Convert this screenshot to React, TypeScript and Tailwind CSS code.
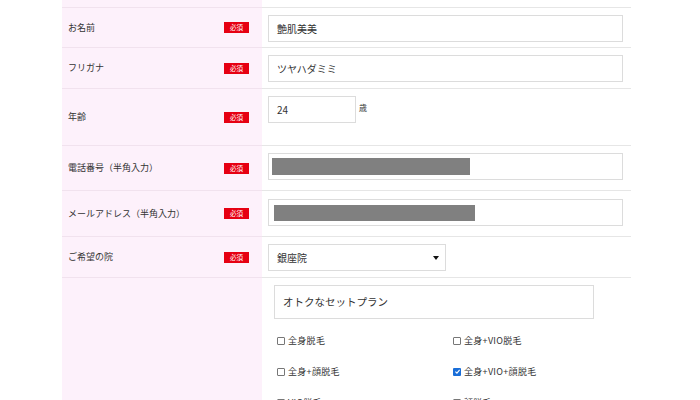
import React from "react";

const jp = { fontFamily: '"Noto Sans CJK JP", "Noto Sans", sans-serif' };

const Badge = () => (
  <span className="mr-[13px] flex h-[11px] w-[25px] items-center justify-center bg-[#e60012] text-[6.5px] leading-none text-white">
    必須
  </span>
);

interface RowProps {
  label?: string;
  required?: boolean;
  height: string;
  children?: React.ReactNode;
}

const Row: React.FC<RowProps> = ({ label, required, height, children }) => (
  <div className={`flex ${height}`}>
    <div className="flex w-[200px] shrink-0 items-center justify-between border-b border-[#f1e2ee] bg-[#fdf1fb] pl-[6px]">
      <span className="text-[9px] text-[#333]">{label}</span>
      {required && <Badge />}
    </div>
    <div className="flex-1 border-b border-[#e6e6e6] pl-[6px] pr-[8px] pt-[7px]">{children}</div>
  </div>
);

const Input: React.FC<{ value?: string; className?: string; children?: React.ReactNode }> = ({
  value,
  className = "px-[8px]",
  children,
}) => (
  <div className={`flex h-[27px] items-center border border-[#dcdcdc] bg-white text-[10px] text-[#333] ${className}`}>
    {value}
    {children}
  </div>
);

const Check: React.FC<{ label: string; checked?: boolean }> = ({ label, checked }) => (
  <div className="flex h-[31px] items-center gap-[3px] text-[9px] text-[#333]">
    {checked ? (
      <span className="flex h-[8px] w-[8px] items-center justify-center rounded-[1px] bg-[#1a6ed8]">
        <svg viewBox="0 0 10 10" className="h-[7px] w-[7px]">
          <path d="M2 5.2 L4.2 7.3 L8 2.8" stroke="white" strokeWidth="1.6" fill="none" />
        </svg>
      </span>
    ) : (
      <span className="h-[8px] w-[8px] rounded-[1px] border border-[#777] bg-white" />
    )}
    <span className="tracking-[0.3px]">{label}</span>
  </div>
);

export default function App() {
  return (
    <div className="h-[400px] w-[700px] overflow-hidden bg-white" style={jp}>
      <div className="ml-[62px] w-[569px]">
        <Row height="h-[8px]" />
        <Row label="お名前" required height="h-[40px]">
          <Input value="艶肌美美" />
        </Row>
        <Row label="フリガナ" required height="h-[41px]">
          <Input value="ツヤハダミミ" />
        </Row>
        <Row label="年齢" required height="h-[57px]">
          <div className="flex items-start gap-[3px]">
            <Input value="24" className="w-[88px] px-[8px]" />
            <span className="pt-[6px] text-[8px] text-[#333]">歳</span>
          </div>
        </Row>
        <Row label="電話番号（半角入力）" required height="h-[45px]">
          <Input className="h-[26px] pl-[3px]">
            <span className="h-[17px] w-[198px] bg-[#808080]" />
          </Input>
        </Row>
        <Row label="メールアドレス（半角入力）" required height="h-[46px]">
          <div className="pt-[1px]">
            <Input className="pl-[5px]">
              <span className="h-[16px] w-[201px] bg-[#808080]" />
            </Input>
          </div>
        </Row>
        <Row label="ご希望の院" required height="h-[41px]">
          <Input className="w-[178px] justify-between pl-[8px] pr-[6px]">
            <span>銀座院</span>
            <svg viewBox="0 0 6 4" className="h-[4px] w-[6px]">
              <path d="M0 0 L6 0 L3 4 Z" fill="#111" />
            </svg>
          </Input>
        </Row>
        <Row height="h-[140px]">
          <div className="pl-[6px]">
            <div className="flex h-[34px] w-[320px] items-center border border-[#dcdcdc] px-[8px] text-[10.5px] text-[#333]">
              オトクなセットプラン
            </div>
            <div className="mt-[6px] grid grid-cols-[176px_1fr] pl-[3px]">
              <Check label="全身脱毛" />
              <Check label="全身+VIO脱毛" />
              <Check label="全身+顔脱毛" />
              <Check label="全身+VIO+顔脱毛" checked />
              <Check label="VIO脱毛" />
              <Check label="顔脱毛" />
            </div>
          </div>
        </Row>
      </div>
    </div>
  );
}
